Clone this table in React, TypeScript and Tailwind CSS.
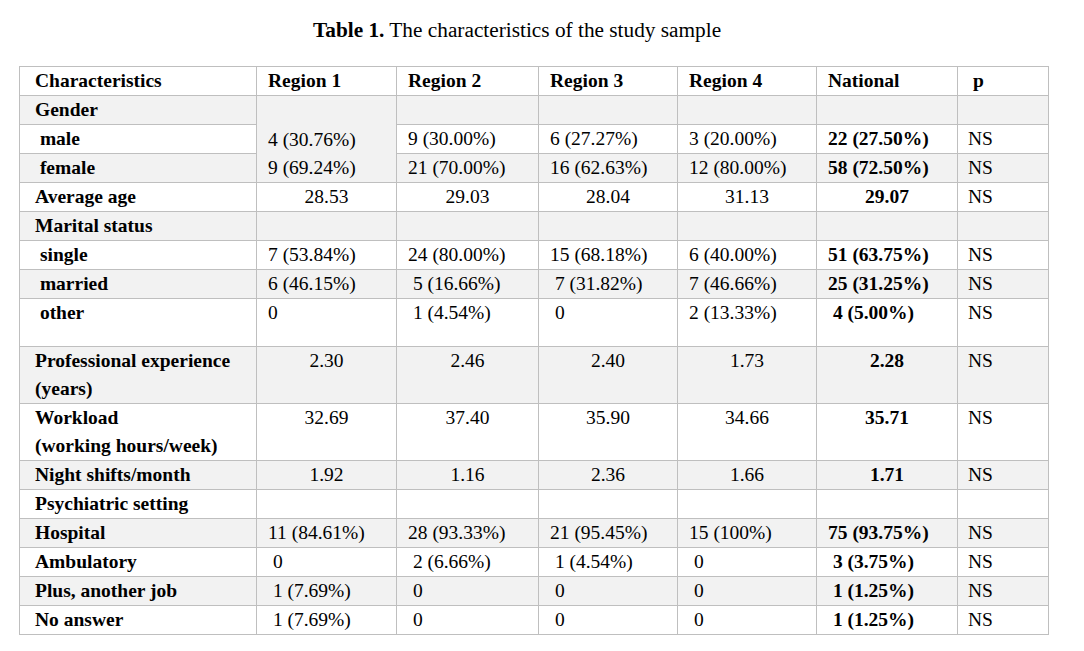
import type { ReactNode } from 'react';

const NB = '\u00a0';

interface RowSpec {
  label: string[];
  values?: string[]; // Region 1..4, National
  p?: string;
  shade?: boolean;
  center?: boolean;
  tall?: boolean;
}

const ROWS: RowSpec[] = [
  { label: ['Average age'], values: ['28.53', '29.03', '28.04', '31.13', '29.07'], p: 'NS', center: true },
  { label: ['Marital status'], shade: true },
  { label: [NB + 'single'], values: ['7 (53.84%)', '24 (80.00%)', '15 (68.18%)', '6 (40.00%)', '51 (63.75%)'], p: 'NS' },
  { label: [NB + 'married'], values: ['6 (46.15%)', NB + '5 (16.66%)', NB + '7 (31.82%)', '7 (46.66%)', '25 (31.25%)'], p: 'NS', shade: true },
  { label: [NB + 'other'], values: ['0', NB + '1 (4.54%)', NB + '0', '2 (13.33%)', NB + '4 (5.00%)'], p: 'NS', tall: true },
  { label: ['Professional experience', '(years)'], values: ['2.30', '2.46', '2.40', '1.73', '2.28'], p: 'NS', shade: true, center: true },
  { label: ['Workload', '(working hours/week)'], values: ['32.69', '37.40', '35.90', '34.66', '35.71'], p: 'NS', center: true },
  { label: ['Night shifts/month'], values: ['1.92', '1.16', '2.36', '1.66', '1.71'], p: 'NS', shade: true, center: true },
  { label: ['Psychiatric setting'] },
  { label: ['Hospital'], values: ['11 (84.61%)', '28 (93.33%)', '21 (95.45%)', '15 (100%)', '75 (93.75%)'], p: 'NS', shade: true },
  { label: ['Ambulatory'], values: [NB + '0', NB + '2 (6.66%)', NB + '1 (4.54%)', NB + '0', NB + '3 (3.75%)'], p: 'NS' },
  { label: ['Plus, another job'], values: [NB + '1 (7.69%)', NB + '0', NB + '0', NB + '0', NB + '1 (1.25%)'], p: 'NS', shade: true },
  { label: ['No answer'], values: [NB + '1 (7.69%)', NB + '0', NB + '0', NB + '0', NB + '1 (1.25%)'], p: 'NS' },
];

const cellBase = 'border border-[#bfbfbf] align-top p-0';

function Td({ children, className = '', rowSpan }: { children?: ReactNode; className?: string; rowSpan?: number }) {
  return (
    <td rowSpan={rowSpan} className={`${cellBase} ${className}`}>
      {children}
    </td>
  );
}

function LabelCell({ lines }: { lines: string[] }) {
  return (
    <Td className="pl-[15px] font-bold">
      {lines.map((l, i) => (
        <div key={i}>{l}</div>
      ))}
    </Td>
  );
}

function DataRow({ row }: { row: RowSpec }) {
  const bg = row.shade ? 'bg-[#f2f2f2]' : 'bg-white';
  const values = row.values ?? ['', '', '', '', ''];
  const align = row.center ? 'text-center px-[11px]' : 'text-left pl-[11px]';
  return (
    <tr className={`${bg} ${row.tall ? 'h-[48px]' : ''}`}>
      <LabelCell lines={row.label} />
      {values.map((v, i) => (
        <Td key={i} className={`${align} ${i === 4 ? 'font-bold' : ''}`}>
          {v}
        </Td>
      ))}
      <Td className="pl-[10px]">{row.p ?? ''}</Td>
    </tr>
  );
}

export default function App() {
  return (
    <div className="w-[1084px] h-[651px] bg-white text-black font-['Liberation_Serif','Times_New_Roman',serif]">
      <div className="pt-[16px] pl-[313px] text-[21.3px] leading-[28px]">
        <span className="font-bold">Table 1.</span> The characteristics of the study sample
      </div>

      <table className="mt-[22px] ml-[19px] w-[1029px] table-fixed border-collapse text-[19.5px] leading-[28px]">
        <colgroup>
          <col className="w-[237px]" />
          <col className="w-[140px]" />
          <col className="w-[142px]" />
          <col className="w-[139px]" />
          <col className="w-[139px]" />
          <col className="w-[141px]" />
          <col className="w-[91px]" />
        </colgroup>
        <tbody>
          <tr className="bg-white font-bold">
            <Td className="pl-[15px]">Characteristics</Td>
            <Td className="pl-[11px]">Region 1</Td>
            <Td className="pl-[11px]">Region 2</Td>
            <Td className="pl-[11px]">Region 3</Td>
            <Td className="pl-[11px]">Region 4</Td>
            <Td className="pl-[11px]">National</Td>
            <Td className="pl-[10px]">{NB}p</Td>
          </tr>

          {/* Gender block — Region 1 values sit in one merged cell */}
          <tr className="bg-[#f2f2f2]">
            <LabelCell lines={['Gender']} />
            <Td rowSpan={3} className="pl-[11px] align-bottom! bg-[#f2f2f2]">
              <div>4 (30.76%)</div>
              <div>9 (69.24%)</div>
            </Td>
            <Td />
            <Td />
            <Td />
            <Td />
            <Td />
          </tr>
          <tr className="bg-white">
            <LabelCell lines={[NB + 'male']} />
            <Td className="pl-[11px]">9 (30.00%)</Td>
            <Td className="pl-[11px]">6 (27.27%)</Td>
            <Td className="pl-[11px]">3 (20.00%)</Td>
            <Td className="pl-[11px] font-bold">22 (27.50%)</Td>
            <Td className="pl-[10px]">NS</Td>
          </tr>
          <tr className="bg-[#f2f2f2]">
            <LabelCell lines={[NB + 'female']} />
            <Td className="pl-[11px]">21 (70.00%)</Td>
            <Td className="pl-[11px]">16 (62.63%)</Td>
            <Td className="pl-[11px]">12 (80.00%)</Td>
            <Td className="pl-[11px] font-bold">58 (72.50%)</Td>
            <Td className="pl-[10px]">NS</Td>
          </tr>

          {ROWS.map((r, i) => (
            <DataRow key={i} row={r} />
          ))}
        </tbody>
      </table>
    </div>
  );
}
